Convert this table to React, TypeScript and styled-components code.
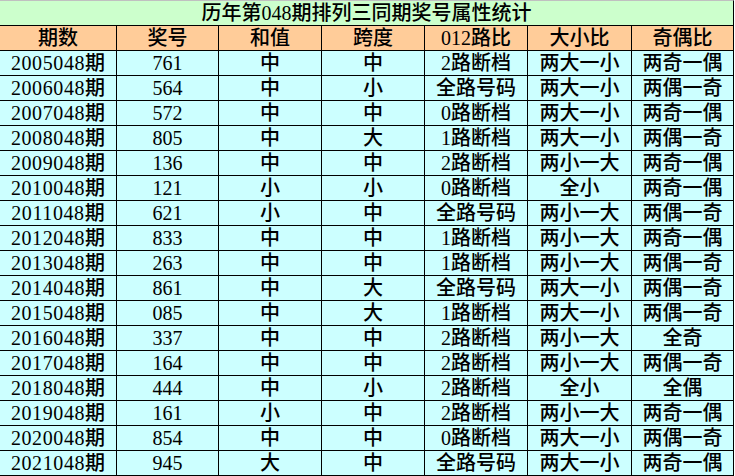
import React from 'react';
import styled, { createGlobalStyle } from 'styled-components';

const GlobalStyle = createGlobalStyle`
  html, body {
    margin: 0;
    padding: 0;
    background: #ffffff;
  }
`;

const Sheet = styled.div`
  display: grid;
  grid-template-columns: 117px 102px 103px 103px 103px 104px 102px;
  width: 734px;
  font-family: 'Liberation Serif', 'Noto Sans CJK SC', serif;
  font-weight: 500;
  color: #000000;
`;

const Title = styled.div`
  grid-column: 1 / -1;
  height: 24px;
  line-height: 25px;
  background: #ccffcc;
  border-top: 1px solid #c0c0c0;
  border-bottom: 1px solid #000000;
  border-right: 1px solid #000000;
  text-align: center;
  font-size: 20px;
`;

const Cell = styled.div<{ $head?: boolean }>`
  height: 24px;
  line-height: 25px;
  background: ${(p) => (p.$head ? '#ffcc99' : '#ccffff')};
  border-bottom: 1px solid #000000;
  border-right: 1px solid #000000;
  text-align: center;
  font-size: 20px;
  white-space: nowrap;
  overflow: hidden;
`;

const Num = styled.span`
  letter-spacing: 0.6px;
`;

const headers = ['期数', '奖号', '和值', '跨度', '012路比', '大小比', '奇偶比'];

const rows: string[][] = [
  ['2005048', '761', '中', '中', '2路断档', '两大一小', '两奇一偶'],
  ['2006048', '564', '中', '小', '全路号码', '两大一小', '两偶一奇'],
  ['2007048', '572', '中', '中', '0路断档', '两大一小', '两奇一偶'],
  ['2008048', '805', '中', '大', '1路断档', '两大一小', '两偶一奇'],
  ['2009048', '136', '中', '中', '2路断档', '两小一大', '两奇一偶'],
  ['2010048', '121', '小', '小', '0路断档', '全小', '两奇一偶'],
  ['2011048', '621', '小', '中', '全路号码', '两小一大', '两偶一奇'],
  ['2012048', '833', '中', '中', '1路断档', '两小一大', '两奇一偶'],
  ['2013048', '263', '中', '中', '1路断档', '两小一大', '两偶一奇'],
  ['2014048', '861', '中', '大', '全路号码', '两大一小', '两偶一奇'],
  ['2015048', '085', '中', '大', '1路断档', '两大一小', '两偶一奇'],
  ['2016048', '337', '中', '中', '2路断档', '两小一大', '全奇'],
  ['2017048', '164', '中', '中', '2路断档', '两小一大', '两偶一奇'],
  ['2018048', '444', '中', '小', '2路断档', '全小', '全偶'],
  ['2019048', '161', '小', '中', '2路断档', '两小一大', '两奇一偶'],
  ['2020048', '854', '中', '中', '0路断档', '两大一小', '两偶一奇'],
  ['2021048', '945', '大', '中', '全路号码', '两大一小', '两奇一偶'],
];

export default function App() {
  return (
    <>
      <GlobalStyle />
      <Sheet>
        <Title>历年第048期排列三同期奖号属性统计</Title>
        {headers.map((h) => (
          <Cell key={h} $head>
            {h}
          </Cell>
        ))}
        {rows.map(([period, ...rest]) => (
          <React.Fragment key={period}>
            <Cell>
              <Num>{period}</Num>期
            </Cell>
            {rest.map((v, i) => (
              <Cell key={i}>{v}</Cell>
            ))}
          </React.Fragment>
        ))}
      </Sheet>
    </>
  );
}
